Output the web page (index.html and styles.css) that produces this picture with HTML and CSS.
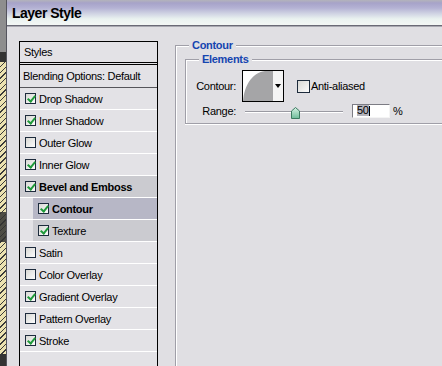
FILE: index.html
```html
<!DOCTYPE html>
<html>
<head>
  <title>Layer Style</title>
  <link rel="stylesheet" href="styles.css">
  <meta charset="utf-8">
</head>
<body>
  <div class="desk"></div>
  <div class="win">
    <div class="titlebar">Layer Style</div>
    <div class="client">
      <div class="stylelist">
        <div class="lhead">Styles</div>
        <div class="lrow blend">Blending Options: Default</div>
        <div class="lrow"><span class="cb on"></span>Drop Shadow</div>
        <div class="lrow"><span class="cb on"></span>Inner Shadow</div>
        <div class="lrow"><span class="cb"></span>Outer Glow</div>
        <div class="lrow"><span class="cb on"></span>Inner Glow</div>
        <div class="lrow group"><span class="cb on"></span>Bevel and Emboss</div>
        <div class="lrow sub sel"><span class="cb on"></span>Contour</div>
        <div class="lrow sub"><span class="cb on"></span>Texture</div>
        <div class="lrow"><span class="cb"></span>Satin</div>
        <div class="lrow"><span class="cb"></span>Color Overlay</div>
        <div class="lrow"><span class="cb on"></span>Gradient Overlay</div>
        <div class="lrow"><span class="cb"></span>Pattern Overlay</div>
        <div class="lrow"><span class="cb on"></span>Stroke</div>
      </div>
      <div class="panel">
        <fieldset class="grp outer">
          <legend>Contour</legend>
          <fieldset class="grp inner">
            <legend>Elements</legend>
            <div class="erow">
              <span class="lbl">Contour:</span>
              <div class="cpick">
                <svg width="30" height="30" viewBox="0 0 30 30"><path d="M0 30 C1 16 8 2 22 0 H30 V30 Z" fill="#a5a5a7"/></svg>
                <span class="cdrop"></span>
              </div>
              <span class="cb big"></span><span class="aa">Anti-aliased</span>
            </div>
            <div class="erow range">
              <span class="lbl">Range:</span>
              <div class="slider">
                <svg class="thumb" width="9" height="12" viewBox="0 0 9 12">
                  <defs><linearGradient id="tg" x1="0" y1="0" x2="0" y2="1"><stop offset="0" stop-color="#d6f2e4"/><stop offset="1" stop-color="#6dbb98"/></linearGradient></defs>
                  <path d="M4.5 0.5 L8.5 4 V11.5 H0.5 V4 Z" fill="url(#tg)" stroke="#3d7a60"/>
                </svg>
              </div>
              <div class="num"><span class="selx">50</span><span class="caret"></span></div>
              <span class="pct">%</span>
            </div>
          </fieldset>
        </fieldset>
      </div>
    </div>
  </div>
</body>
</html>
```
FILE: styles.css
```css
* { box-sizing: border-box; }

body {
  margin: 0;
  width: 442px;
  height: 366px;
  overflow: hidden;
  display: flex;
  background: #e0dfe3;
  font-family: "Liberation Sans", Arial, sans-serif;
  font-size: 11px;
  letter-spacing: -0.3px;
  color: #000;
}

/* bit of the desktop behind the dialog */
.desk {
  flex: 0 0 6px;
  background:
    linear-gradient(#8e8e8e 0 52px, #333 52px 62px, transparent 62px 212px, rgba(50,50,50,0.85) 212px 242px, transparent 242px 354px, #333 354px),
    repeating-linear-gradient(135deg, #ece2b0 0 3px, #3a3a3a 3px 4px);
}

.win {
  flex: 1 1 auto;
  min-width: 0;
  border-left: 1px solid #55555e;
  display: flex;
  flex-direction: column;
}

.titlebar {
  flex: none;
  height: 27px;
  padding: 2px 0 0 5px;
  line-height: 23px;
  font-size: 14px;
  font-weight: bold;
  letter-spacing: -0.5px;
  background: linear-gradient(#b3b3bb 0, #a7a3c9 3px, #b4b2d4 8px, #d2d6e4 14px, #eaf2f0 19px, #f3f7f5 25px, #6a6a76 25px 26px, #a9a9b1 26px);
}

.client {
  flex: 1;
  min-height: 0;
  display: flex;
  align-items: flex-start;
  padding: 14px 0 0 12px;
}

/* styles list, cut off by the bottom edge */
.stylelist {
  flex: 0 0 139px;
  height: 325px;
  border: 1px solid #000;
  border-bottom: none;
  background: #e3e2e6;
}
.lhead {
  height: 23px;
  padding-left: 4px;
  line-height: 20px;
  border-bottom: 3px double #000;
}
.lrow {
  height: 22px;
  display: flex;
  align-items: center;
  padding-left: 5px;
  border-bottom: 1px solid #fff;
}
.lrow.blend {
  height: 23px;
  padding-left: 3px;
  border-bottom-color: #55555a;
}
.lrow.group {
  background: #cbcbd0;
  font-weight: bold;
}
.lrow.sub {
  padding-left: 18px;
  background: linear-gradient(to right, transparent 13px, #cbcbd0 13px);
}
.lrow.sub.sel {
  background: linear-gradient(to right, transparent 13px, #b7b7c6 13px);
  font-weight: bold;
}

.cb {
  flex: none;
  position: relative;
  width: 11px;
  height: 11px;
  margin-right: 3px;
  border: 1px solid #1d2b3c;
  background: linear-gradient(135deg, #d8d8d4, #fcfcfc);
}
.cb.on::after {
  content: "";
  position: absolute;
  left: 3px;
  top: 0;
  width: 3px;
  height: 6px;
  border: solid #1f9a3a;
  border-width: 0 2px 2px 0;
  transform: rotate(40deg);
}
.cb.big {
  width: 13px;
  height: 13px;
  margin: 0 1px 0 13px;
}

/* right side, cut off by the right and bottom edges */
.panel {
  flex: 1 1 auto;
  min-width: 0;
  margin: -2px 0 0 17px;
}
.grp {
  margin: 0;
  min-width: 0;
  border: 1px solid #a09fa8;
  border-right: none;
  box-shadow: inset 1px 1px 0 #fff, 0 1px 0 #fff;
}
.grp legend {
  padding: 0 3px;
  line-height: 13px;
  color: #1545b0;
  font-weight: bold;
  background: #e0dfe3;
}
.outer {
  height: 327px;
  border-bottom: none;
  box-shadow: inset 1px 1px 0 #fff;
  padding: 1px 0 0 9px;
}
.outer > legend { margin-left: 4px; }
.inner {
  padding: 4px 0 5px 8px;
}
.inner > legend { margin-left: 5px; }

.erow {
  display: flex;
  align-items: center;
}
.lbl {
  width: 42px;
  text-align: right;
}
.cpick {
  display: flex;
  width: 42px;
  height: 32px;
  margin-left: 6px;
  border: 1px solid #000;
  background: #fff;
}
.cpick svg { display: block; }
.cdrop {
  flex: 1;
  display: flex;
  align-items: center;
  justify-content: center;
  background: #f4f4f4;
}
.cdrop::after {
  content: "";
  border-left: 3px solid transparent;
  border-right: 3px solid transparent;
  border-top: 4px solid #000;
}

.range {
  height: 15px;
  margin-top: 1px;
}
.slider {
  position: relative;
  width: 98px;
  height: 15px;
  margin-left: 9px;
  background: linear-gradient(transparent 8px, #9a9aa2 8px 9px, #fff 9px 10px, transparent 10px);
}
.thumb {
  position: absolute;
  left: 46px;
  top: 4px;
}
.num {
  display: flex;
  align-items: center;
  width: 38px;
  height: 14px;
  margin-left: 9px;
  padding-left: 4px;
  background: #fff;
  border: 1px solid;
  border-color: #7c7c84 #f4f4f4 #f4f4f4 #7c7c84;
}
.selx {
  background: #b4b4bc;
  line-height: 11px;
}
.caret {
  width: 1px;
  height: 10px;
  background: #000;
}
.pct { margin-left: 3px; }
```
